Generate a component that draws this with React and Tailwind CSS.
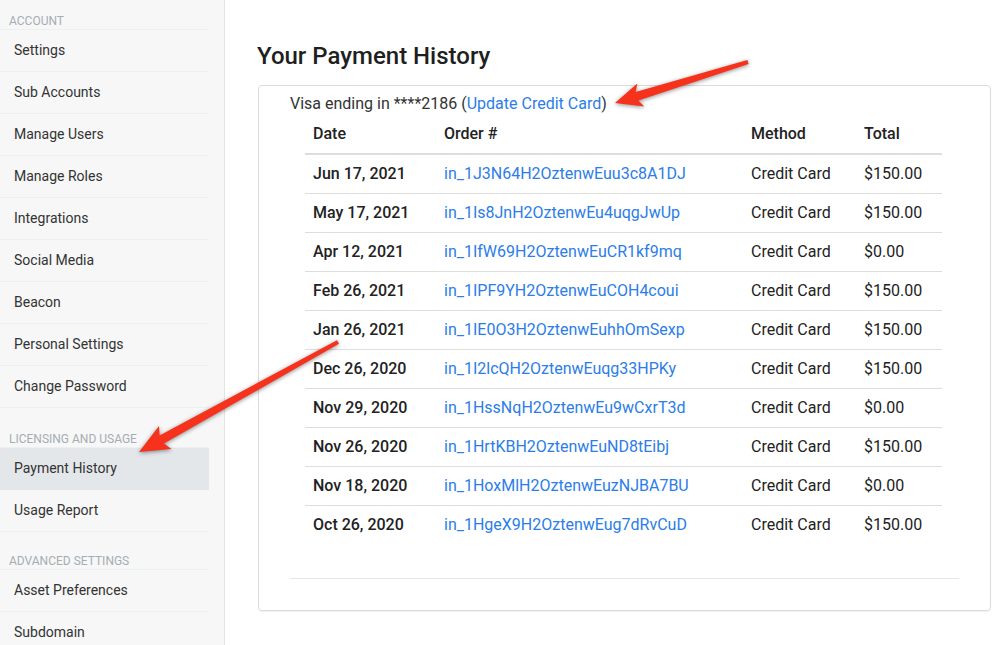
import React from "react";

const accountLinks = [
  "Settings",
  "Sub Accounts",
  "Manage Users",
  "Manage Roles",
  "Integrations",
  "Social Media",
  "Beacon",
  "Personal Settings",
  "Change Password",
];

const payments = [
  { date: "Jun 17, 2021", order: "in_1J3N64H2OztenwEuu3c8A1DJ", total: "$150.00" },
  { date: "May 17, 2021", order: "in_1Is8JnH2OztenwEu4uqgJwUp", total: "$150.00" },
  { date: "Apr 12, 2021", order: "in_1IfW69H2OztenwEuCR1kf9mq", total: "$0.00" },
  { date: "Feb 26, 2021", order: "in_1IPF9YH2OztenwEuCOH4coui", total: "$150.00" },
  { date: "Jan 26, 2021", order: "in_1IE0O3H2OztenwEuhhOmSexp", total: "$150.00" },
  { date: "Dec 26, 2020", order: "in_1I2lcQH2OztenwEuqg33HPKy", total: "$150.00" },
  { date: "Nov 29, 2020", order: "in_1HssNqH2OztenwEu9wCxrT3d", total: "$0.00" },
  { date: "Nov 26, 2020", order: "in_1HrtKBH2OztenwEuND8tEibj", total: "$150.00" },
  { date: "Nov 18, 2020", order: "in_1HoxMlH2OztenwEuzNJBA7BU", total: "$0.00" },
  { date: "Oct 26, 2020", order: "in_1HgeX9H2OztenwEug7dRvCuD", total: "$150.00" },
];

// tapered arrow polygon from tail to tip
const arrowPoints = (tail, tip, headLen, headHalf, tailHalf, neckHalf) => {
  const dx = tip[0] - tail[0];
  const dy = tip[1] - tail[1];
  const len = Math.sqrt(dx * dx + dy * dy);
  const ux = dx / len;
  const uy = dy / len;
  const nx = -uy;
  const ny = ux;
  const at = (along, side) => [tail[0] + ux * along + nx * side, tail[1] + uy * along + ny * side];
  const pts = [
    at(0, tailHalf),
    at(len - headLen + 4, neckHalf),
    at(len - headLen, headHalf),
    at(len, 0),
    at(len - headLen, -headHalf),
    at(len - headLen + 4, -neckHalf),
    at(0, -tailHalf),
  ];
  return pts.map((p) => p.map((v) => v.toFixed(1)).join(",")).join(" ");
};

const SectionLabel = ({ children, pad }) => (
  <div className={`${pad} pl-[9px] text-[12px] leading-4 uppercase text-[#a5adb4] border-b border-[#edf0f3]`}>
    {children}
  </div>
);

const NavItem = ({ label, active }) => (
  <div
    className={`h-[42px] flex items-center pl-[14px] text-[14px] text-[#333] border-b ${
      active ? "bg-[#e4e7ea] border-[#e4e7ea]" : "border-[#edf0f3]"
    }`}
  >
    {label}
  </div>
);

const App = () => {
  return (
    <div className="relative h-screen w-full flex overflow-hidden bg-white" style={{ fontFamily: "Roboto, 'Noto Sans', sans-serif" }}>
      <aside className="w-[225px] shrink-0 bg-[#f7f7f7] border-r border-[#e3e3e3] pr-[15px]">
        <SectionLabel pad="pt-[13px]">Account</SectionLabel>
        {accountLinks.map((l) => (
          <NavItem key={l} label={l} />
        ))}
        <SectionLabel pad="pt-[23px]">Licensing and Usage</SectionLabel>
        <NavItem label="Payment History" active />
        <NavItem label="Usage Report" />
        <SectionLabel pad="pt-[21px]">Advanced Settings</SectionLabel>
        <NavItem label="Asset Preferences" />
        <NavItem label="Subdomain" />
      </aside>

      <main className="flex-1 pl-[32px] pr-[16px] pt-[40px]">
        <h1 className="text-[24px] leading-8 font-medium text-[#1f1f1f] mb-[13px]">Your Payment History</h1>
        <div className="ml-px border border-[#dcdcdc] rounded-[4px] shadow-[0_1px_1px_rgba(0,0,0,0.06)] px-[31px] pt-[8px] pb-[31px]">
          <p className="text-[16px] leading-5 text-[#333]">
            Visa ending in ****2186 (<a className="text-[#2b7de9]">Update Credit Card</a>)
          </p>
          <table className="mx-[15px] w-[637px] text-[16px] text-[#222] border-collapse">
            <thead>
              <tr className="h-[40px] border-b-2 border-[#dddddd]">
                <th className="w-[131px] text-left font-medium pl-[8px]">Date</th>
                <th className="w-[307px] text-left font-medium pl-[8px]">Order #</th>
                <th className="w-[113px] text-left font-medium pl-[8px]">Method</th>
                <th className="text-left font-medium pl-[8px]">Total</th>
              </tr>
            </thead>
            <tbody>
              {payments.map((p, i) => (
                <tr key={p.order} className={`h-[39px] ${i < payments.length - 1 ? "border-b border-[#dddddd]" : ""}`}>
                  <td className="pl-[8px] font-medium">{p.date}</td>
                  <td className="pl-[8px] text-[#2b7de9]">{p.order}</td>
                  <td className="pl-[8px]">Credit Card</td>
                  <td className="pl-[8px]">{p.total}</td>
                </tr>
              ))}
            </tbody>
          </table>
          <div className="mt-[34px] border-t border-[#e6e6e6]" />
        </div>
      </main>

      <svg
        className="absolute inset-0 pointer-events-none drop-shadow-[0_1px_2px_rgba(0,0,0,0.45)]"
        width="1007"
        height="645"
      >
        <polygon fill="#f6321d" points={arrowPoints([748, 62], [615, 103], 27, 12, 2, 4.5)} />
        <polygon fill="#f6321d" points={arrowPoints([338, 342], [139, 452], 30, 13, 2, 4.5)} />
      </svg>
    </div>
  );
};

export default App;
